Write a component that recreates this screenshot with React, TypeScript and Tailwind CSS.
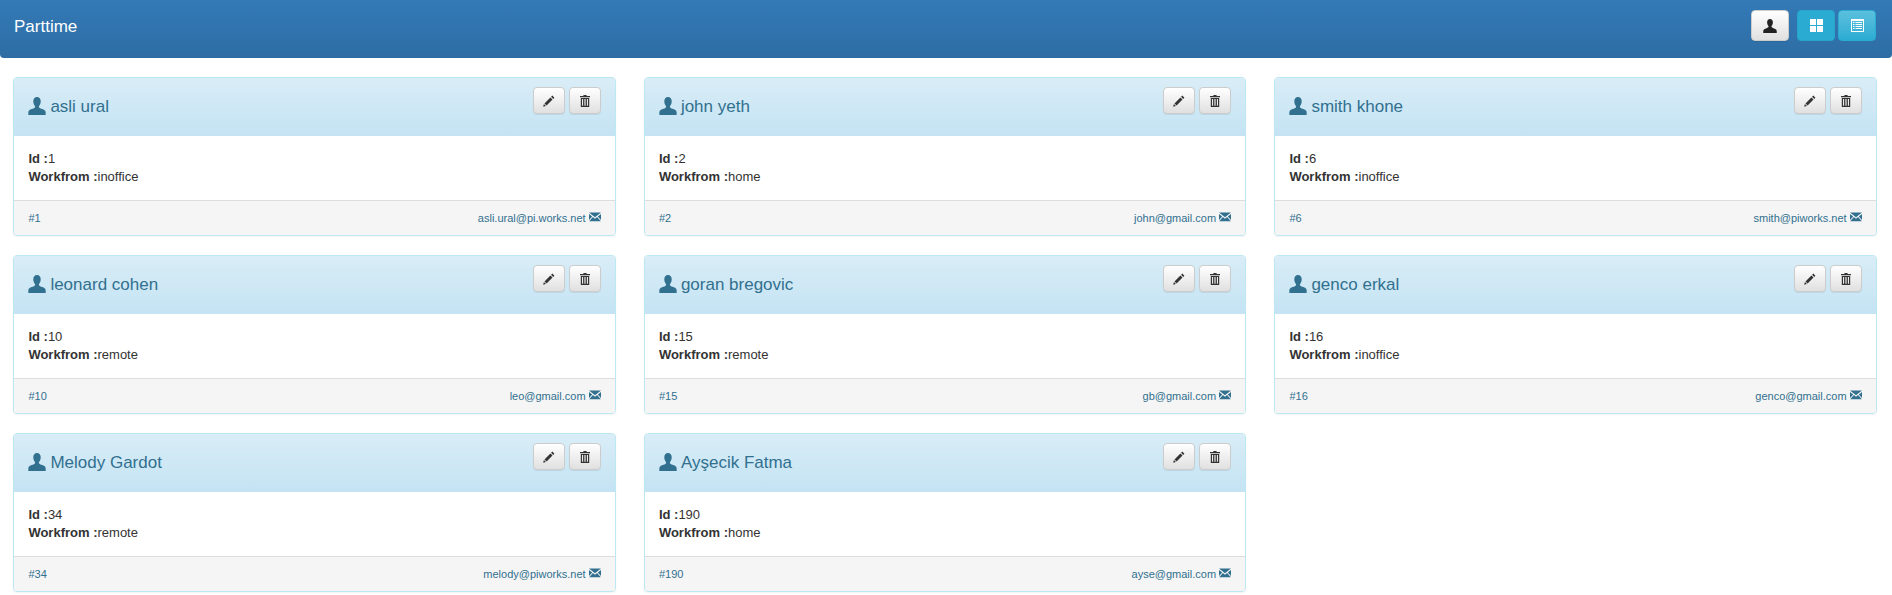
const UserIcon = ({ className }: { className: string }) => (
  <svg viewBox="0 0 16 16" className={className} fill="currentColor">
    <path d="M8 0C5.900 0 4.700 1.500 4.700 3.700c0 1.500.5 3 1.300 4 .3.4.4.8.3 1.200-.2.8-1 1.100-2.200 1.600C2.100 11.200.3 12 .3 13.600V16h15.400v-2.400c0-1.600-1.800-2.400-3.800-3.100-1.200-.5-2-.8-2.200-1.600-.1-.4 0-.8.3-1.200.8-1 1.300-2.500 1.300-4C11.300 1.500 10.100 0 8 0z" />
  </svg>
);
const PencilIcon = ({ className }: { className: string }) => (
  <svg viewBox="0 0 12 12" className={className} fill="currentColor">
    <path d="M9.300.6l2.100 2.100-1.200 1.200-2.100-2.100zM7.400 2.500l2.100 2.100-5.900 5.900-2.100-2.100zM.9 9.100l2 2-2.700.7z" />
  </svg>
);
const TrashIcon = ({ className }: { className: string }) => (
  <svg viewBox="0 0 12 12" className={className} fill="currentColor">
    <path fillRule="evenodd" d="M4.600 0h2.800l.4 1H11v1.200H1V1h3.200zM1.800 3h8.400v9H1.800zM3 4v6.800h1.100V4zm2.400 0v6.800h1.200V4zm2.500 0v6.800H9V4z" />
  </svg>
);
const MailIcon = ({ className }: { className: string }) => (
  <svg viewBox="0 0 12 10" className={className} fill="currentColor">
    <path d="M0 .5h12L6 5.300zM0 1.900l3.200 2.600L0 8zM12 1.900v6L8.800 4.500zM3.900 5.100L6 6.800l2.100-1.700 3.700 4.100H.2z" />
  </svg>
);
const GridIcon = ({ className }: { className: string }) => (
  <svg viewBox="0 0 13 13" className={className} fill="currentColor">
    <path d="M0 0h6v6H0zM7 0h6v6H7zM0 7h6v6H0zM7 7h6v6H7z" />
  </svg>
);
const ListIcon = ({ className }: { className: string }) => (
  <svg viewBox="0 0 13 13" className={className} fill="currentColor">
    <path fillRule="evenodd" d="M0 0h13v13H0zM1 2v10h11V2z" />
    <path d="M2 3h1.500v1H2zM4.500 3H11v1H4.500zM2 5h1.500v1H2zM4.500 5H11v1H4.500zM2 7h1.500v1H2zM4.500 7H11v1H4.500zM2 9h1.500v1H2zM4.500 9H11v1H4.500z" />
  </svg>
);

const people = [
  { name: "asli ural", id: 1, work: "inoffice", email: "asli.ural@pi.works.net" },
  { name: "john yeth", id: 2, work: "home", email: "john@gmail.com" },
  { name: "smith khone", id: 6, work: "inoffice", email: "smith@piworks.net" },
  { name: "leonard cohen", id: 10, work: "remote", email: "leo@gmail.com" },
  { name: "goran bregovic", id: 15, work: "remote", email: "gb@gmail.com" },
  { name: "genco erkal", id: 16, work: "inoffice", email: "genco@gmail.com" },
  { name: "Melody Gardot", id: 34, work: "remote", email: "melody@piworks.net" },
  { name: "Ayşecik Fatma", id: 190, work: "home", email: "ayse@gmail.com" },
];

const whiteBtn =
  "flex items-center justify-center rounded-[4px] border border-[#ccc] bg-gradient-to-b from-white to-[#e0e0e0] shadow-[0_1px_1px_rgba(0,0,0,0.075)]";

function Card({ p }: { p: (typeof people)[number] }) {
  return (
    <div className="h-[159px] overflow-hidden rounded-[4px] border border-[#bce8f1] bg-white shadow-[0_1px_2px_rgba(0,0,0,0.05)]">
      <div className="flex h-[58px] justify-between bg-gradient-to-b from-[#d9edf7] to-[#c4e3f3] pl-[14px] pr-[14px] pt-[9px] text-[#31708f]">
        <div className="flex items-start pt-[8px]">
          <UserIcon className="mt-[2px] h-[18px] w-[18px]" />
          <span className="ml-[4px] text-[17px] leading-[24px]">{p.name}</span>
        </div>
        <div className="flex gap-[4px]">
          <button className={`${whiteBtn} h-[27px] w-[32px] text-[#333]`}>
            <PencilIcon className="h-[12px] w-[12px]" />
          </button>
          <button className={`${whiteBtn} h-[27px] w-[32px] text-[#333]`}>
            <TrashIcon className="h-[12px] w-[12px]" />
          </button>
        </div>
      </div>
      <div className="h-[65px] border-b border-[#ddd] px-[14px] pt-[14px] text-[13px] leading-[18px] text-[#333]">
        <div>
          <b>Id :</b>
          {p.id}
        </div>
        <div>
          <b>Workfrom :</b>
          {p.work}
        </div>
      </div>
      <div className="flex h-[34px] items-center justify-between bg-[#f5f5f5] px-[14px] text-[11px] text-[#31708f]">
        <span>#{p.id}</span>
        <span className="flex items-center">
          {p.email}
          <MailIcon className="mb-[2px] ml-[3px] h-[10px] w-[12px]" />
        </span>
      </div>
    </div>
  );
}

export default function App() {
  return (
    <div className="min-h-[595px] bg-white font-['Liberation_Sans',Arial,sans-serif]">
      <div className="flex h-[58px] items-start justify-between rounded-b-[4px] bg-gradient-to-b from-[#337ab7] to-[#2e6da4] pl-[14px] pr-[16px] pt-[10px]">
        <span className="pt-[7px] text-[17px] leading-[20px] text-white">Parttime</span>
        <div className="flex">
          <button className={`${whiteBtn} h-[31px] w-[38px] text-[#222]`}>
            <UserIcon className="h-[14px] w-[14px]" />
          </button>
          <button className="ml-[8px] flex h-[31px] w-[38px] items-center justify-center rounded-[4px] border border-[#28a4c9] bg-[#2aabd2] text-white">
            <GridIcon className="h-[13px] w-[13px]" />
          </button>
          <button className="ml-[3px] flex h-[31px] w-[38px] items-center justify-center rounded-[4px] border border-[#2aabd2] bg-gradient-to-b from-[#5bc0de] to-[#2aabd2] text-white">
            <ListIcon className="h-[13px] w-[13px]" />
          </button>
        </div>
      </div>
      <div className="grid grid-cols-3 gap-x-[28.3px] gap-y-[19px] pl-[13.4px] pr-[15.4px] pt-[19px]">
        {people.map((p) => (
          <Card key={p.id} p={p} />
        ))}
      </div>
    </div>
  );
}
